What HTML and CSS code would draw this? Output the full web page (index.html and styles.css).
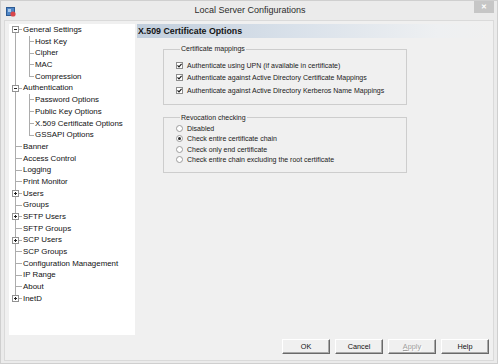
FILE: index.html
```html
<!DOCTYPE html>
<html lang="en">
<head>
  <meta charset="UTF-8">
  <meta name="viewport" content="width=device-width, initial-scale=1.0">
  <title>Local Server Configurations</title>
  <link rel="stylesheet" href="styles.css">
</head>
<body>
  <div class="window">
    <!-- title bar -->
    <div class="titlebar">
      <svg class="app-icon" width="10" height="10" viewBox="0 0 10 10">
        <rect x="0.5" y="0.5" width="8" height="8" fill="#4f86c6" stroke="#2d5b94"/>
        <rect x="2" y="2" width="3" height="3" fill="#a8c8ea"/>
        <circle cx="7" cy="7" r="2.6" fill="#d8464a"/>
      </svg>
      <span class="title">Local Server Configurations</span>
      <span class="close-btn">&#x2715;</span>
    </div>

    <div class="client">
      <div class="main">
        <!-- navigation tree -->
        <div class="tree">
          <div class="row root first"><span class="stem"><span class="expander minus"></span></span>General Settings</div>
          <div class="row child"><span class="stem"></span><span class="stem2"></span>Host Key</div>
          <div class="row child"><span class="stem"></span><span class="stem2"></span>Cipher</div>
          <div class="row child"><span class="stem"></span><span class="stem2"></span>MAC</div>
          <div class="row child"><span class="stem"></span><span class="stem2 last"></span>Compression</div>
          <div class="row root"><span class="stem"><span class="expander minus"></span></span>Authentication</div>
          <div class="row child"><span class="stem"></span><span class="stem2"></span>Password Options</div>
          <div class="row child"><span class="stem"></span><span class="stem2"></span>Public Key Options</div>
          <div class="row child selected"><span class="stem"></span><span class="stem2"></span>X.509 Certificate Options</div>
          <div class="row child"><span class="stem"></span><span class="stem2 last"></span>GSSAPI Options</div>
          <div class="row root"><span class="stem"></span>Banner</div>
          <div class="row root"><span class="stem"></span>Access Control</div>
          <div class="row root"><span class="stem"></span>Logging</div>
          <div class="row root"><span class="stem"></span>Print Monitor</div>
          <div class="row root"><span class="stem"><span class="expander plus"></span></span>Users</div>
          <div class="row root"><span class="stem"></span>Groups</div>
          <div class="row root"><span class="stem"><span class="expander plus"></span></span>SFTP Users</div>
          <div class="row root"><span class="stem"></span>SFTP Groups</div>
          <div class="row root"><span class="stem"><span class="expander plus"></span></span>SCP Users</div>
          <div class="row root"><span class="stem"></span>SCP Groups</div>
          <div class="row root"><span class="stem"></span>Configuration Management</div>
          <div class="row root"><span class="stem"></span>IP Range</div>
          <div class="row root"><span class="stem"></span>About</div>
          <div class="row root last"><span class="stem"><span class="expander plus"></span></span>InetD</div>
        </div>

        <!-- settings page -->
        <div class="panel">
          <div class="panel-header">X.509 Certificate Options</div>

          <fieldset class="group group-mappings">
            <legend>Certificate mappings</legend>
            <div class="opt"><span class="check"><svg width="5" height="5" viewBox="0 0 5 5"><path d="M0.5 2.4 L2 3.9 L4.6 0.8" stroke="#1a1a1a" stroke-width="1.2" fill="none"/></svg></span>Authenticate using UPN (if available in certificate)</div>
            <div class="opt"><span class="check"><svg width="5" height="5" viewBox="0 0 5 5"><path d="M0.5 2.4 L2 3.9 L4.6 0.8" stroke="#1a1a1a" stroke-width="1.2" fill="none"/></svg></span>Authenticate against Active Directory Certificate Mappings</div>
            <div class="opt"><span class="check"><svg width="5" height="5" viewBox="0 0 5 5"><path d="M0.5 2.4 L2 3.9 L4.6 0.8" stroke="#1a1a1a" stroke-width="1.2" fill="none"/></svg></span>Authenticate against Active Directory Kerberos Name Mappings</div>
          </fieldset>

          <fieldset class="group group-revocation">
            <legend>Revocation checking</legend>
            <div class="opt radio-row"><span class="radio"></span>Disabled</div>
            <div class="opt radio-row"><span class="radio on"></span>Check entire certificate chain</div>
            <div class="opt radio-row"><span class="radio"></span>Check only end certificate</div>
            <div class="opt radio-row"><span class="radio"></span>Check entire chain excluding the root certificate</div>
          </fieldset>
        </div>
      </div>

      <div class="buttons">
        <button class="btn">OK</button>
        <button class="btn">Cancel</button>
        <button class="btn disabled"><u>A</u>pply</button>
        <button class="btn">Help</button>
      </div>
    </div>
  </div>
</body>
</html>
```

FILE: styles.css
```css
* {
  margin: 0;
  padding: 0;
  box-sizing: border-box;
}

body {
  width: 498px;
  height: 364px;
  background-color: #ebebeb;
  font-family: "Liberation Sans", Arial, sans-serif;
  color: #000;
  overflow: hidden;
}

.window {
  width: 498px;
  height: 364px;
  border: 1px solid #cfcfcf;
  display: flex;
  flex-direction: column;
}

/* title bar */
.titlebar {
  height: 19px;
  display: flex;
  align-items: center;
  padding-left: 5px;
}
.app-icon {
  margin-top: 3px;
}
.title {
  flex: 1;
  text-align: center;
  font-size: 9px;
  color: #2b2b2b;
  margin-left: -10px;
  margin-right: -20px;
  padding-bottom: 1px;
}
.close-btn {
  align-self: flex-start;
  width: 20px;
  height: 12px;
  margin-right: 3px;
  background-color: #c6c6c6;
  color: #fff;
  font-size: 7px;
  font-weight: bold;
  text-align: center;
  line-height: 12px;
}

/* client area */
.client {
  flex: 1;
  margin: 0 3px 2px 3px;
  border: 1px solid #dadada;
  background-color: #f0f0f0;
  padding: 3px 3px 6px 4px;
  display: flex;
  flex-direction: column;
}
.main {
  height: 311px;
  display: flex;
}

/* tree */
.tree {
  width: 126px;
  background-color: #fff;
  font-size: 7.9px;
  color: #111;
}
.row {
  height: 11.7px;
  line-height: 11.7px;
  display: flex;
  align-items: center;
  white-space: nowrap;
}
.stem, .stem2 {
  height: 100%;
  flex: none;
  display: flex;
  align-items: center;
}
.stem {
  width: 14px;
  background:
    linear-gradient(#acacac, #acacac) 6px 0 / 1px 100% no-repeat;
}
.root .stem {
  background:
    linear-gradient(#acacac, #acacac) 6px 0 / 1px 100% no-repeat,
    linear-gradient(#acacac, #acacac) 6px 50% / 7px 1px no-repeat;
}
.root.first .stem {
  background:
    linear-gradient(#acacac, #acacac) 6px 100% / 1px 50% no-repeat,
    linear-gradient(#acacac, #acacac) 6px 50% / 7px 1px no-repeat;
}
.root.last .stem {
  background:
    linear-gradient(#acacac, #acacac) 6px 0 / 1px 50% no-repeat,
    linear-gradient(#acacac, #acacac) 6px 50% / 7px 1px no-repeat;
}
.stem2 {
  width: 12px;
  background:
    linear-gradient(#acacac, #acacac) 6px 0 / 1px 100% no-repeat,
    linear-gradient(#acacac, #acacac) 6px 50% / 5px 1px no-repeat;
}
.stem2.last {
  background:
    linear-gradient(#acacac, #acacac) 6px 0 / 1px 50% no-repeat,
    linear-gradient(#acacac, #acacac) 6px 50% / 5px 1px no-repeat;
}
.expander {
  width: 7px;
  height: 7px;
  margin-left: 3px;
  border: 1px solid #929292;
  background-color: #fff;
}
.expander.minus {
  background:
    linear-gradient(#222, #222) 1px 2px / 3px 1px no-repeat,
    #fff;
}
.expander.plus {
  background:
    linear-gradient(#222, #222) 1px 2px / 3px 1px no-repeat,
    linear-gradient(#222, #222) 2px 1px / 1px 3px no-repeat,
    #fff;
}

/* right panel */
.panel {
  flex: 1;
  margin-left: 2px;
  font-size: 7px;
  color: #1a1a1a;
}
.panel-header {
  height: 14px;
  line-height: 14px;
  padding-left: 1px;
  font-size: 8.8px;
  font-weight: bold;
  color: #141414;
  background: linear-gradient(to right, #c1cedc, #d9e1ea 45%, #eef0f2 85%, #f0f0f0);
}
.group {
  width: 244px;
  margin-left: 26px;
  border: 1px solid #cdcdcd;
  padding: 6px 0 7px 12px;
}
.group legend {
  margin-left: 4px;
  padding: 0 1px;
  line-height: 8px;
}
.group-mappings {
  margin-top: 7px;
}
.group-revocation {
  margin-top: 9px;
  padding-top: 2px;
}
.opt {
  height: 12.5px;
  display: flex;
  align-items: center;
  white-space: nowrap;
}
.radio-row {
  height: 10.3px;
}
.check {
  width: 7px;
  height: 7px;
  margin-right: 4px;
  border: 1px solid #8d8d8d;
  background-color: #fff;
  display: flex;
  align-items: center;
  justify-content: center;
}
.radio {
  width: 7px;
  height: 7px;
  margin-right: 4px;
  border: 1px solid #9c9c9c;
  border-radius: 50%;
  background-color: #fff;
  display: flex;
  align-items: center;
  justify-content: center;
}
.radio.on::after {
  content: "";
  width: 3px;
  height: 3px;
  border-radius: 50%;
  background-color: #2a2a2a;
}

/* dialog buttons */
.buttons {
  margin-top: 4px;
  display: flex;
  justify-content: flex-end;
  gap: 5px;
  padding-right: 1px;
}
.btn {
  width: 48px;
  height: 15px;
  font-family: "Liberation Sans", Arial, sans-serif;
  font-size: 7.3px;
  color: #111;
  background-color: #f0f0f0;
  border: 1px solid;
  border-color: #ffffff #696969 #696969 #ffffff;
  box-shadow: inset -1px -1px 0 #a8a8a8;
}
.btn.disabled {
  color: #a0a0a0;
  text-shadow: 1px 1px 0 #fff;
}
.btn u {
  text-decoration: underline;
}
```
